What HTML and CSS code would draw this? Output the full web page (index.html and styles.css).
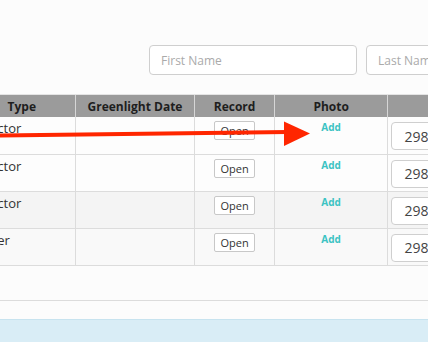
FILE: index.html
```html
<!DOCTYPE html>
<html>
<head>
<meta charset="utf-8">
<link rel="stylesheet" href="styles.css">
</head>
<body>
<div class="page">
  <div class="filters">
    <input class="filter" type="text" placeholder="First Name">
    <input class="filter" type="text" placeholder="Last Name">
  </div>
  <table class="grid">
    <thead>
      <tr>
        <th class="c-type">Type</th>
        <th class="c-date">Greenlight Date</th>
        <th class="c-rec">Record</th>
        <th class="c-photo">Photo</th>
        <th class="c-num"></th>
      </tr>
    </thead>
    <tbody>
      <tr class="r1">
        <td class="type">Director</td>
        <td></td>
        <td class="center"><button class="btn">Open</button></td>
        <td class="center photo"><a class="add">Add</a></td>
        <td class="num"><input class="numin" type="text" value="298"></td>
      </tr>
      <tr class="r2">
        <td class="type">Director</td>
        <td></td>
        <td class="center"><button class="btn">Open</button></td>
        <td class="center photo"><a class="add">Add</a></td>
        <td class="num"><input class="numin" type="text" value="298"></td>
      </tr>
      <tr class="r3">
        <td class="type">Director</td>
        <td></td>
        <td class="center"><button class="btn">Open</button></td>
        <td class="center photo"><a class="add">Add</a></td>
        <td class="num"><input class="numin" type="text" value="298"></td>
      </tr>
      <tr class="r4">
        <td class="type">Writer</td>
        <td></td>
        <td class="center"><button class="btn">Open</button></td>
        <td class="center photo"><a class="add">Add</a></td>
        <td class="num"><input class="numin" type="text" value="298"></td>
      </tr>
    </tbody>
  </table>
  <div class="table-foot"></div>
  <div class="spacer"></div>
  <div class="info"></div>
  <svg class="arrow" width="428" height="342" viewBox="0 0 428 342">
    <line x1="0" y1="135.5" x2="288" y2="132" stroke="#ff2600" stroke-width="4"/>
    <polygon points="284,121.5 284,146 310,133.5" fill="#ff2600"/>
  </svg>
</div>
</body>
</html>
```
FILE: styles.css
```css
html, body {
  margin: 0;
  padding: 0;
}
body {
  background: #fcfcfc;
  font-family: "Open Sans", "Liberation Sans", sans-serif;
  color: #333;
  overflow: hidden;
  width: 428px;
  height: 342px;
}
.page {
  position: relative;
  width: 428px;
  height: 342px;
  overflow: hidden;
}
.filters {
  display: flex;
  gap: 9px;
  padding: 45px 0 0 149px;
  height: 30px;
}
.filter {
  flex: 0 0 auto;
  box-sizing: border-box;
  width: 208px;
  height: 30px;
  border: 1px solid #cfcfcf;
  border-radius: 4px;
  background: #fff;
  padding: 0 11px;
  font-family: "Open Sans", sans-serif;
  font-size: 12px;
  color: #333;
}
.filter::placeholder {
  color: #aaa;
}
.grid {
  margin: 19px 0 0 -31px;
  border-collapse: collapse;
  table-layout: fixed;
  width: 500px;
}
.grid th {
  background: #9b9b9b;
  color: #1e1e1e;
  font-size: 12px;
  font-weight: 700;
  height: 22px;
  padding: 0;
  border-left: 1px solid #d6d6d6;
  border-top: 1px solid #e4e4e4;
  text-align: center;
}
.grid th:first-child { border-left: none; }
.c-type { width: 105px; }
.c-date { width: 118px; }
.c-rec { width: 78px; }
.c-photo { width: 112px; }
.c-num { width: 80px; }
.grid td {
  height: 37px;
  box-sizing: border-box;
  vertical-align: top;
  padding: 2px 8px 0;
  font-size: 13px;
  line-height: 18px;
  border-left: 1px solid #dcdcdc;
  border-bottom: 1px solid #dcdcdc;
}
.grid td:first-child { border-left: none; }
.grid td.type { padding-left: 3px; }
.grid td.center { text-align: center; }
.grid td.photo { padding-top: 0; }
.grid td.num { padding: 5px 3px 0; }
.r1 td { background: #fdfdfd; }
.r2 td { background: #fdfdfd; }
.r3 td { background: #f4f4f4; }
.r4 td { background: #f9f9f9; }
.btn {
  margin-top: 2px;
  font-family: "Open Sans", sans-serif;
  font-size: 11px;
  line-height: 17px;
  color: #333;
  background: #fff;
  border: 1px solid #c8c8c8;
  border-radius: 2px;
  padding: 0 5px;
  height: 19px;
}
.add {
  font-size: 10px;
  font-weight: 700;
  color: #3cc3c3;
}
.numin {
  box-sizing: border-box;
  width: 80px;
  height: 28px;
  border: 1px solid #cfcfcf;
  border-radius: 4px;
  background: #fff;
  padding: 0 12px;
  font-family: "Open Sans", sans-serif;
  font-size: 14px;
  color: #444;
}
.table-foot {
  height: 34px;
  border-bottom: 1px solid #dcdcdc;
}
.spacer {
  height: 18px;
}
.info {
  height: 23px;
  background: #d9edf6;
  border-top: 1px solid #c7e3ef;
}
.arrow {
  position: absolute;
  left: 0;
  top: 0;
  pointer-events: none;
}
```
